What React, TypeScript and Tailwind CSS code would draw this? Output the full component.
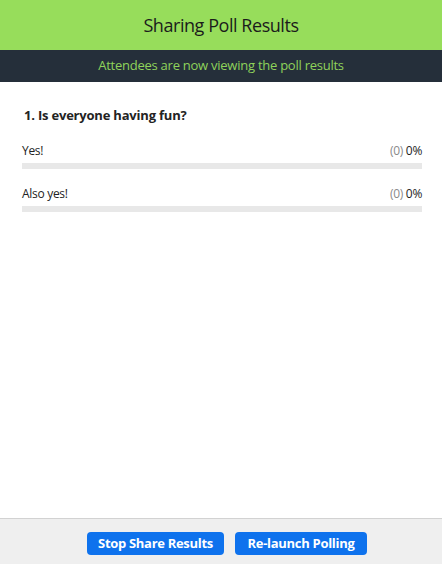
import React from "react";

const options = [
  { label: "Yes!", count: 0, pct: 0 },
  { label: "Also yes!", count: 0, pct: 0 },
];

export default function App() {
  return (
    <div
      className="w-[442px] h-[564px] flex flex-col bg-white overflow-hidden"
      style={{ fontFamily: '"Open Sans", "Noto Sans", sans-serif' }}
    >
      <div className="h-[50px] bg-[#97dd5b] flex items-center justify-center">
        <span className="text-[18px] text-[#1b1b1b] tracking-[-0.45px]">Sharing Poll Results</span>
      </div>
      <div className="h-[32px] bg-[#252f3a] flex items-center justify-center">
        <span className="text-[13px] text-[#8fd35a] tracking-[-0.25px]">Attendees are now viewing the poll results</span>
      </div>
      <div className="flex-1 flex flex-col pl-[22px] pr-[20px] pt-[24px]">
        <div className="pl-[2px] text-[13px] font-bold text-[#232323] tracking-[-0.2px] leading-[18px]">
          1. Is everyone having fun?
        </div>
        <div className="flex flex-col mt-[19px] gap-[17px]">
          {options.map((o) => (
            <div key={o.label} className="flex flex-col">
              <div className="flex justify-between items-end text-[12px] leading-[16px] tracking-[-0.3px] text-[#232323]">
                <span>{o.label}</span>
                <span>
                  <span className="text-[#8a8a8a]">({o.count})</span> {o.pct}%
                </span>
              </div>
              <div className="mt-[4px] h-[6px] bg-[#e8e8e8]" />
            </div>
          ))}
        </div>
      </div>
      <div className="h-[46px] border-t border-[#d2d2d2] bg-[#efefef] flex items-start justify-center gap-[11px] pt-[13px] pl-[12px]">
        <button className="h-[23px] w-[137px] rounded-[4px] bg-[#0e72ed] text-white text-[13px] font-bold tracking-[-0.3px] flex items-center justify-center">
          Stop Share Results
        </button>
        <button className="h-[23px] w-[132px] rounded-[4px] bg-[#0e72ed] text-white text-[13px] font-bold tracking-[-0.3px] flex items-center justify-center">
          Re-launch Polling
        </button>
      </div>
    </div>
  );
}
